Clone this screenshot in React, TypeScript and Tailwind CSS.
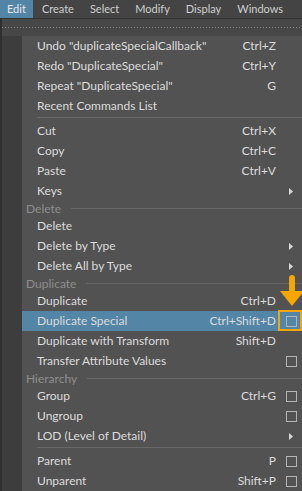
import React from 'react';

type Entry =
  | { kind: 'item'; label: string; shortcut?: string; box?: boolean; sub?: boolean; active?: boolean }
  | { kind: 'sep' }
  | { kind: 'header'; label: string };

const entries: Entry[] = [
  { kind: 'item', label: 'Undo "duplicateSpecialCallback"', shortcut: 'Ctrl+Z' },
  { kind: 'item', label: 'Redo "DuplicateSpecial"', shortcut: 'Ctrl+Y' },
  { kind: 'item', label: 'Repeat "DuplicateSpecial"', shortcut: 'G' },
  { kind: 'item', label: 'Recent Commands List' },
  { kind: 'sep' },
  { kind: 'item', label: 'Cut', shortcut: 'Ctrl+X' },
  { kind: 'item', label: 'Copy', shortcut: 'Ctrl+C' },
  { kind: 'item', label: 'Paste', shortcut: 'Ctrl+V' },
  { kind: 'item', label: 'Keys', sub: true },
  { kind: 'header', label: 'Delete' },
  { kind: 'item', label: 'Delete' },
  { kind: 'item', label: 'Delete by Type', sub: true },
  { kind: 'item', label: 'Delete All by Type', sub: true },
  { kind: 'header', label: 'Duplicate' },
  { kind: 'item', label: 'Duplicate', shortcut: 'Ctrl+D' },
  { kind: 'item', label: 'Duplicate Special', shortcut: 'Ctrl+Shift+D', box: true, active: true },
  { kind: 'item', label: 'Duplicate with Transform', shortcut: 'Shift+D' },
  { kind: 'item', label: 'Transfer Attribute Values', box: true },
  { kind: 'header', label: 'Hierarchy' },
  { kind: 'item', label: 'Group', shortcut: 'Ctrl+G', box: true },
  { kind: 'item', label: 'Ungroup', box: true },
  { kind: 'item', label: 'LOD (Level of Detail)', sub: true },
  { kind: 'sep' },
  { kind: 'item', label: 'Parent', shortcut: 'P', box: true },
  { kind: 'item', label: 'Unparent', shortcut: 'Shift+P', box: true },
];

function Row({ e }: { e: Entry }) {
  if (e.kind === 'sep') {
    return (
      <div className="h-[5px] pt-px pl-[15px]">
        <div className="h-px bg-[#686868]" />
      </div>
    );
  }
  if (e.kind === 'header') {
    return (
      <div className="h-[15px] flex items-center pl-[4px] text-[#8e8e8e]">
        <span>{e.label}</span>
        <div className="flex-1 h-px bg-[#686868] ml-[10px]" />
      </div>
    );
  }
  return (
    <div className={`relative h-5 flex items-center pl-[15px] ${e.active ? 'bg-[#5285a6]' : ''}`}>
      <span className="flex-1 whitespace-nowrap">{e.label}</span>
      {e.shortcut && <span className="whitespace-nowrap">{e.shortcut}</span>}
      <div className="w-[26px] h-full flex items-center justify-end pr-[5px]">
        {e.box && <div className="w-[11px] h-[11px] border border-[#b4b4b4]" />}
        {e.sub && (
          <svg width="4" height="7" viewBox="0 0 4 7" className="mr-[4px]">
            <polygon points="0,0 4,3.5 0,7" fill="#d8d8d8" />
          </svg>
        )}
      </div>
      {e.active && (
        <>
          {/* callout box + arrow */}
          <div className="absolute right-0 top-[-1px] w-[24px] h-[21px] border-2 border-[#f5a700]" />
          <svg width="24" height="32" viewBox="0 0 24 32" className="absolute left-[258px] top-[-36px]">
            <rect x="9" y="0" width="6" height="18" rx="3" fill="#f5a700" />
            <polygon points="0,16 24,16 12,31" fill="#f5a700" />
          </svg>
        </>
      )}
    </div>
  );
}

export default function App() {
  const bar = ['Edit', 'Create', 'Select', 'Modify', 'Display', 'Windows'];
  return (
    <div className="w-[302px] h-[491px] overflow-hidden bg-[#444444] text-[12px] text-[#dcdcdc] font-['Lato','Noto_Sans',sans-serif]">
      {/* menu bar */}
      <div className="h-[18px] flex items-center bg-[#444444] text-[11px] text-[#cfcfcf]">
        {bar.map((b, i) => (
          <div
            key={b}
            className={`h-full flex items-center px-[7px] mr-[2px] ${i === 0 ? 'bg-[#5285a6] text-[#e8e8e8]' : ''}`}
          >
            {b}
          </div>
        ))}
      </div>
      <div className="border-t border-[#333333] border-l-2 border-l-[#2f2f2f]">
        {/* tear-off strip */}
        <div className="h-[17px] flex items-center bg-[#474747]">
          <div className="flex-1 h-px bg-[repeating-linear-gradient(90deg,#8a8a8a_0_1px,transparent_1px_3px)]" />
        </div>
        <div className="flex border-b border-[#2b2b2b]">
          <div className="w-5 bg-[#3d3d3d]" />
          <div className="flex-1 bg-[#525252]">
            {entries.map((e, i) => (
              <Row key={i} e={e} />
            ))}
          </div>
        </div>
      </div>
    </div>
  );
}
